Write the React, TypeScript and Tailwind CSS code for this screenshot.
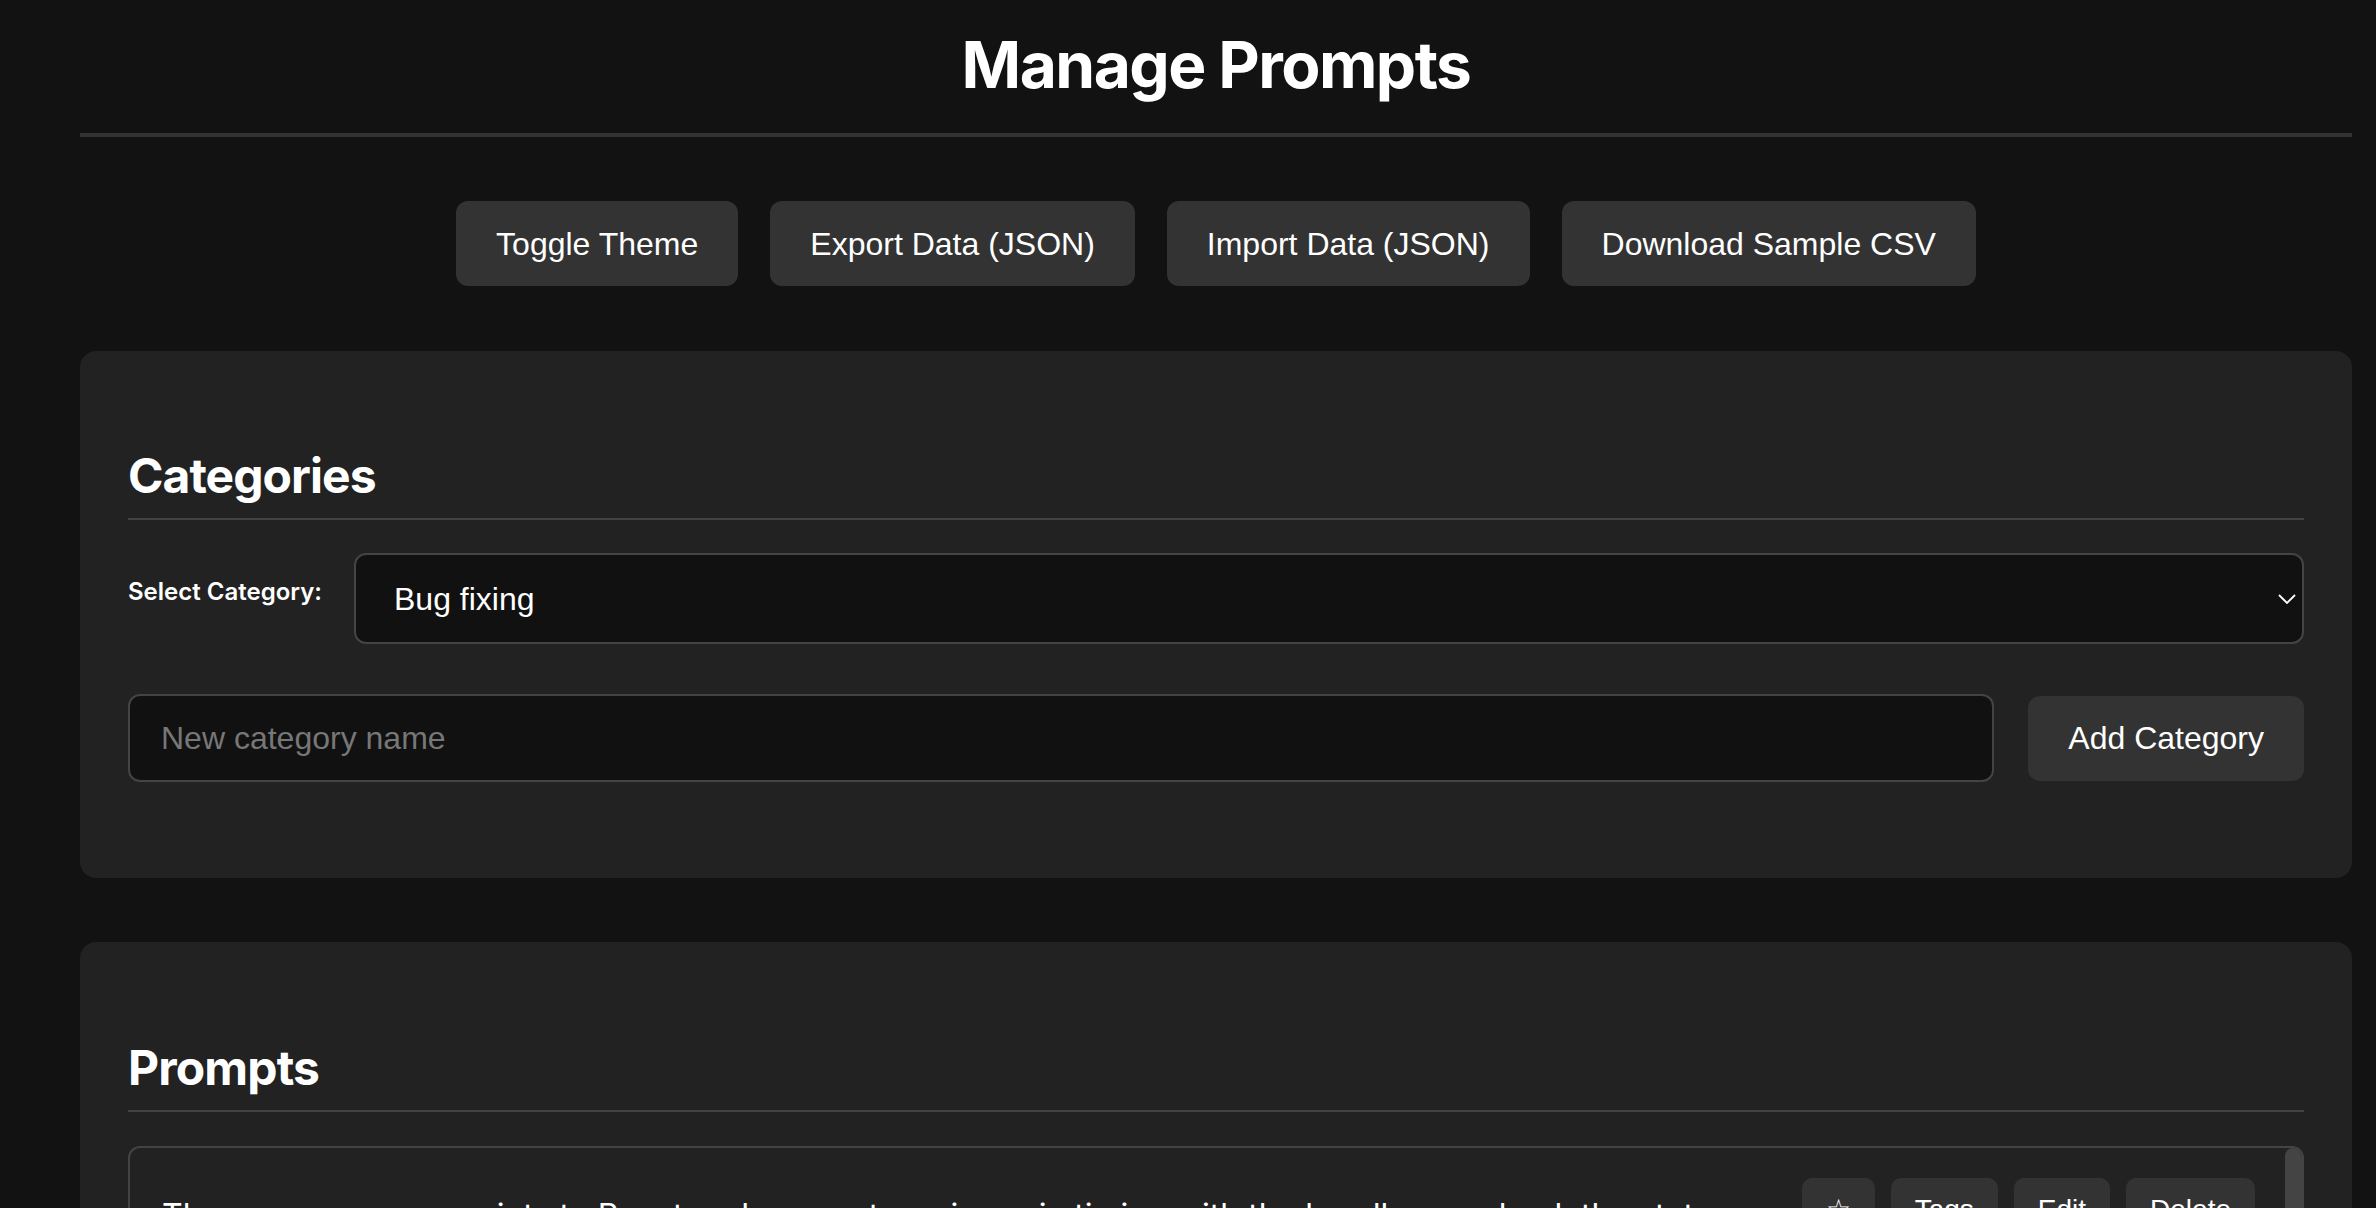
import React from "react";

const topButtons = ["Toggle Theme", "Export Data (JSON)", "Import Data (JSON)", "Download Sample CSV"];

export default function App() {
  return (
    <div className="min-h-screen w-full bg-[#121212] text-white font-['Inter',sans-serif] pl-[80px] pr-[24px] pb-[60px]">
      <h1 className="text-center text-[64px] font-bold tracking-[-0.024em] leading-[77px] pt-[26px] pb-[30px] border-b-[4px] border-[#333333]">
        Manage Prompts
      </h1>

      <div className="flex justify-center gap-[32px] mt-[64px]">
        {topButtons.map((b) => (
          <button
            key={b}
            className="h-[85px] px-[40px] rounded-[12px] bg-[#333333] text-[32px] text-white font-['Liberation_Sans',Arial,sans-serif]"
          >
            {b}
          </button>
        ))}
      </div>

      <section className="mt-[65px] bg-[#222222] rounded-[16px] px-[48px] pt-[96px] pb-[96px]">
        <h2 className="text-[48px] font-bold tracking-[-0.02em] leading-[58px] pb-[13px] border-b-2 border-[#444444]">Categories</h2>

        <div className="mt-[33px] flex items-center">
          <label className="w-[194px] shrink-0 mr-[32px] mb-[14px] whitespace-nowrap text-[24px] font-semibold">
            Select Category:
          </label>
          <div className="flex-1 h-[91px] flex items-center justify-between bg-[#111111] border-2 border-[#444444] rounded-[12px] pl-[38px] pr-[6px]">
            <span className="text-[32px] font-['Liberation_Sans',Arial,sans-serif]">Bug fixing</span>
            <svg width="18" height="10" viewBox="0 0 18 10" fill="none">
              <polyline points="1,1 9,9 17,1" stroke="#ffffff" strokeWidth="1.8" />
            </svg>
          </div>
        </div>

        <div className="mt-[50px] flex items-center gap-[34px]">
          <input
            className="flex-1 h-[88px] bg-[#111111] border-2 border-[#444444] rounded-[12px] px-[31px] text-[32px] text-white placeholder:text-[#777777] font-['Liberation_Sans',Arial,sans-serif] outline-none"
            placeholder="New category name"
          />
          <button className="h-[85px] px-[40px] rounded-[12px] bg-[#333333] text-[32px] text-white font-['Liberation_Sans',Arial,sans-serif] whitespace-nowrap">
            Add Category
          </button>
        </div>
      </section>

      <section className="mt-[64px] bg-[#222222] rounded-[16px] px-[48px] pt-[97px] pb-[48px]">
        <h2 className="text-[48px] font-bold tracking-[-0.018em] leading-[58px] pb-[13px] border-b-2 border-[#444444]">Prompts</h2>

        <div className="mt-[34px] border-2 border-[#444444] rounded-[12px] flex overflow-hidden bg-[#222222]">
          <div className="flex-1 flex items-start gap-[32px] pl-[32px] pr-[30px] pt-[30px] pb-[31px]">
            <p className="flex-1 mt-[18px] text-[32px] leading-[39px]">
              The error message points to React and suggests an issue in timing with the handler, so check the state flow to find the exact cause of the crash when saving a new prompt and explain how to fix it.
            </p>
            <div className="flex gap-[16px] shrink-0">
              {["☆", "Tags", "Edit", "Delete"].map((t) => (
                <button
                  key={t}
                  className="h-[64px] px-[24px] rounded-[10px] bg-[#333333] text-[28px] text-white font-['Liberation_Sans',Arial,sans-serif]"
                >
                  {t}
                </button>
              ))}
            </div>
          </div>
          <div className="w-[17px] shrink-0 bg-[#444444] rounded-t-[8px]" />
        </div>
      </section>
    </div>
  );
}
